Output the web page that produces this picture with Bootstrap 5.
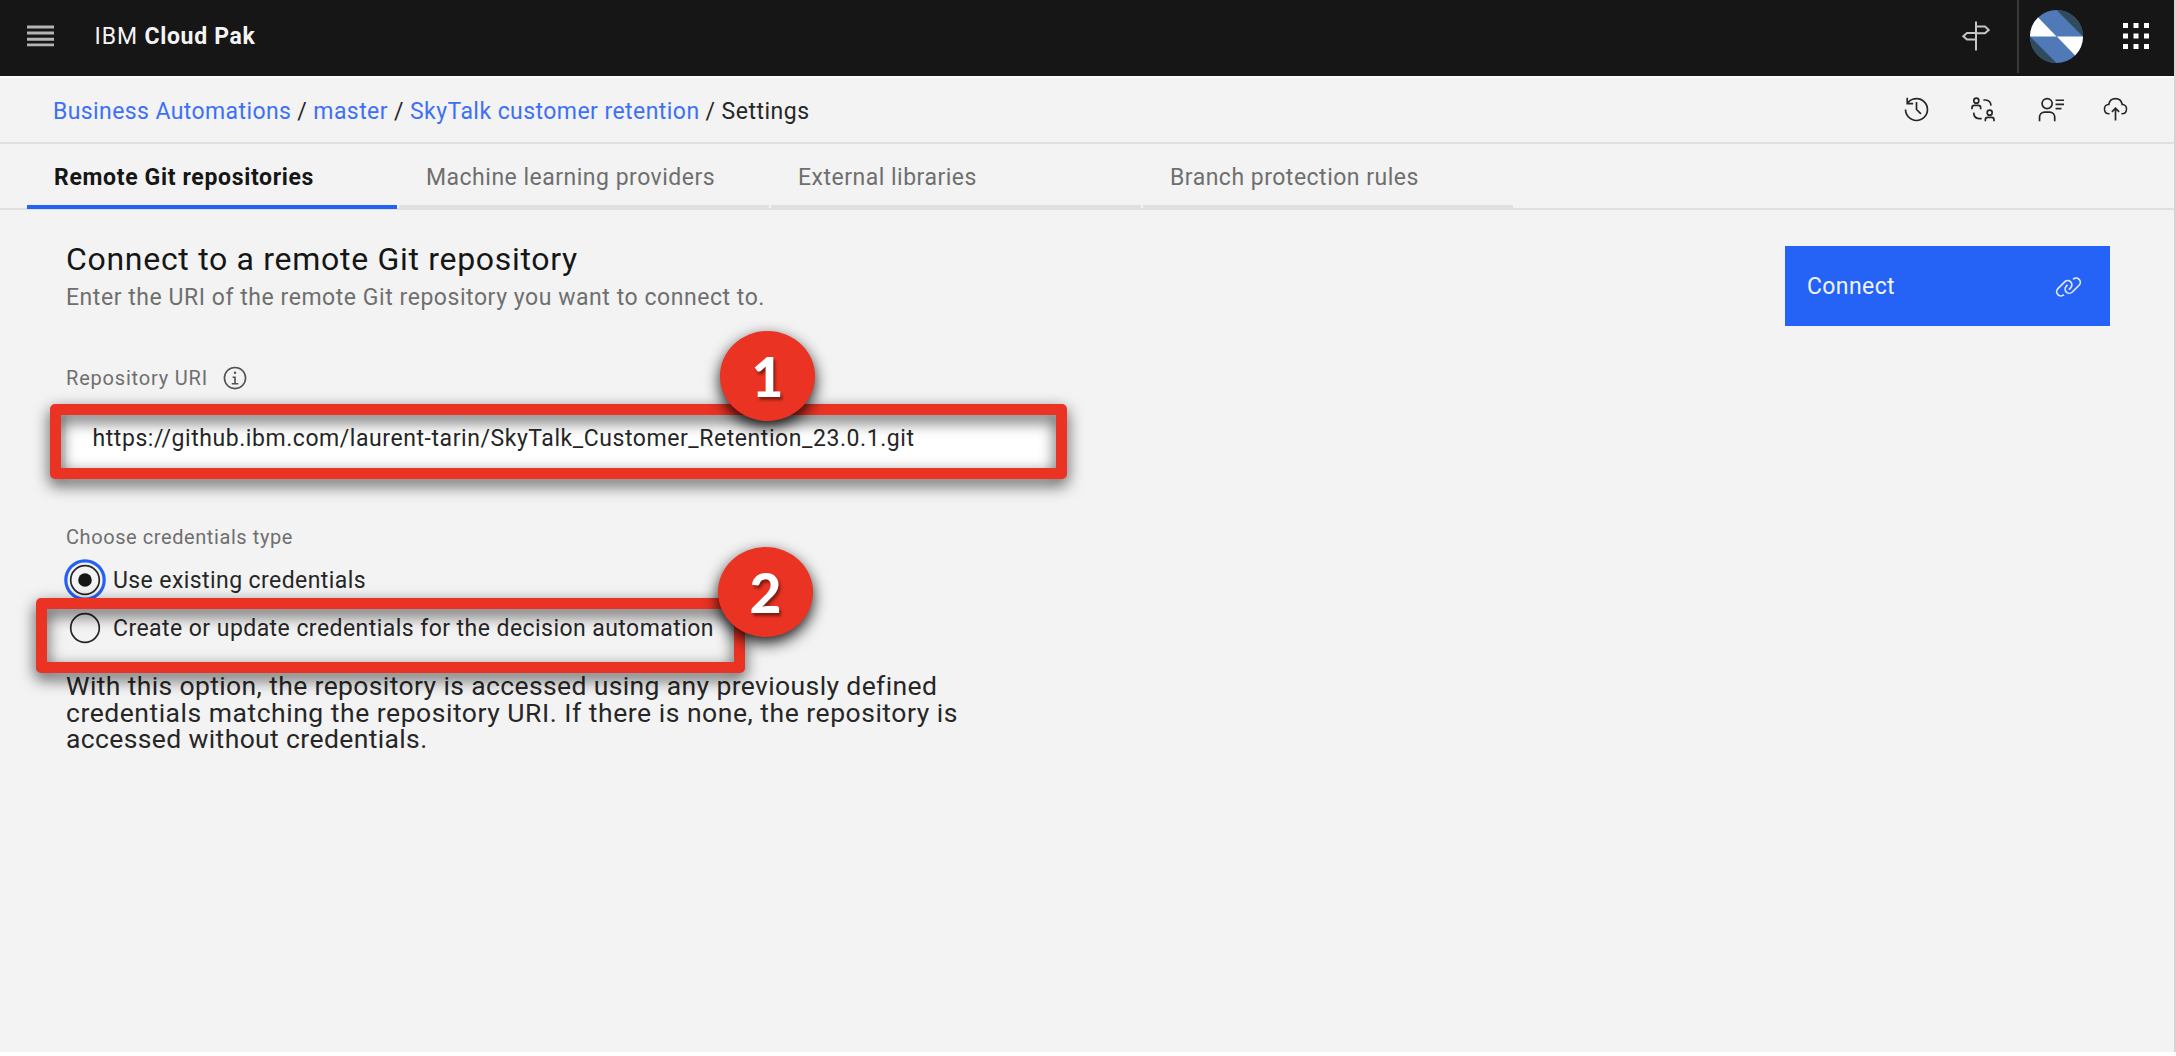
<!DOCTYPE html>
<html lang="en">
<head>
<meta charset="utf-8">
<meta name="viewport" content="width=device-width, initial-scale=1">
<title>IBM Cloud Pak - Settings</title>
<link href="https://cdn.jsdelivr.net/npm/bootstrap@5.3.0/dist/css/bootstrap.min.css" rel="stylesheet">
<style>
body{font-family:Roboto,"Noto Sans",sans-serif;font-size:23px;line-height:28px;letter-spacing:.5px;color:#262626;background:#fff;white-space:nowrap;overflow:hidden}
.app-shell{height:1052px;background:#f3f3f3;border-right:2px solid #d4d4d4}
.top-bar{height:76px;background:#161616;color:#f4f4f4;padding:0 0 4px 27px}
.brand-name{margin-left:40.5px;padding-top:2px;letter-spacing:.9px;color:#f4f4f4}
.brand-name b{letter-spacing:.67px}
.top-sep{width:2px;height:74px;background:#393939;margin:0 11px 0 26px;align-self:flex-start}
.app-dots{margin:0 24px 0 40.5px}
.crumb-bar{height:68px;border-top:2px solid #fcfcfc;border-bottom:2px solid #e0e0e0;padding:0 45px 0 53px}
.crumb-bar a{color:#3d70f6;text-decoration:none;letter-spacing:.44px}
.crumb-trail{padding-top:3px;gap:6px}
.crumb-trail a:first-child{letter-spacing:.4px}
.crumb-tools{gap:41px;padding-bottom:1px}
.tab-bar{height:66px;border-bottom:2px solid #e0e0e0;padding-left:27px;gap:1.6px}
.tab-bar .nav-link{width:370.4px;height:65px;padding:20px 0 0 27px;border-bottom:4px solid #e0e0e0;color:#6f6f6f}
.tab-bar .nav-link.active{color:#161616;font-weight:700;letter-spacing:.66px;border-bottom-color:#2462f5}
.settings-body{padding:29px 64px 0 66px}
.page-title{font-size:32px;line-height:40px;font-weight:400;letter-spacing:.7px;color:#161616;margin:0 0 5px}
.page-hint{color:#6f6f6f;letter-spacing:.547px;margin:0}
.field-label{font-size:20px;line-height:24px;color:#6f6f6f;letter-spacing:.58px;margin:0}
.uri-label{margin-top:53px;letter-spacing:.81px}
.uri-label svg{margin-left:14px}
.uri-input{width:996px;height:67px;margin-top:14px;padding:1px 0 0 26.5px;border:0;border-bottom:1px solid #8d8d8d;border-radius:0;background:#fff;font-size:23px;letter-spacing:.561px;color:#262626}
.cred-label{margin-top:53px}
.radio-list{margin-top:7px}
.radio-line{height:48px;gap:7px;margin-left:-2px}
.radio-line span{padding-top:2px}
.cred-note{font-size:26.5px;line-height:26.6px;margin:21px 0 0;letter-spacing:.375px}
.btn-connect{width:325px;height:80px;margin-top:7px;padding:0 28px 0 22px;border:0;border-radius:0;background:#2563f6;color:#f0f4ff;font-size:23px;letter-spacing:.39px}
.btn-connect span{padding-top:3px}
.mark-frame{position:absolute;border:11px solid #ea3323;border-radius:5px;filter:drop-shadow(0 6px 8px rgba(0,0,0,.7));pointer-events:none}
.frame-uri{left:50px;top:404px;width:1017px;height:75px}
.frame-cred{left:36px;top:598px;width:709px;height:75px}
.mark-dot{position:absolute;width:95px;height:90px;border-radius:50%;background:#ea3323;color:#fff;font:900 55px/90px Lato,"DejaVu Sans",sans-serif;letter-spacing:0;text-align:center;text-shadow:2px 3px 3px rgba(0,0,0,.45);box-shadow:0 6px 15px rgba(0,0,0,.9)}
.dot-one{left:720px;top:331px}
.dot-two{left:718px;top:547px}
svg{display:block;flex:none}
</style>
</head>
<body>
<div class="app-shell position-relative">
  <header class="top-bar d-flex align-items-center">
    <svg width="27" height="22" viewBox="0 0 27 22" fill="#b4b4b4"><path d="M0 0.5h27v3H0zM0 6.6h27v3H0zM0 12.7h27v3H0zM0 18.6h27v2.6H0z"/></svg>
    <div class="brand-name">IBM <b>Cloud Pak</b></div>
    <div class="d-flex align-items-center ms-auto">
      <svg width="30" height="30" viewBox="0 0 30 30" fill="none" stroke="#c6c6c6" stroke-width="2"><path d="M15 .5v29M15 5.500h9l3.700 3.400-3.700 3.400H15M15 12h-9L2.300 15.200 6 18.400h9M6 12.100h9"/></svg>
      <div class="top-sep"></div>
      <svg width="53" height="53" viewBox="510 27 158 158"><defs><clipPath id="face"><circle cx="589" cy="106" r="79"/></clipPath></defs><g clip-path="url(#face)"><path fill="#5079b8" d="M510 27h158v158H510z"/><path fill="#fff" d="M500 106h89L525 40H500zM679 106h-89l64 66h25z"/><path fill="#304b5c" d="M589 27l79 79V27zM510 106l79 79h-79z"/></g></svg>
      <svg class="app-dots" width="27" height="26" viewBox="0 0 27 26" fill="#fff"><path d="M0 0h5v5H0zM10.500 0h5v5h-5zM21 0h5v5h-5zM0 10.500h5v5H0zM10.500 10.500h5v5h-5zM21 10.500h5v5h-5zM0 21h5v5H0zM10.500 21h5v5h-5zM21 21h5v5h-5z"/></svg>
    </div>
  </header>

  <nav class="crumb-bar d-flex align-items-center justify-content-between">
    <div class="crumb-trail d-flex">
      <a href="#">Business Automations</a><span>/</span><a href="#">master</a><span>/</span><a href="#">SkyTalk customer retention</a><span>/</span><span>Settings</span>
    </div>
    <div class="crumb-tools d-flex align-items-center">
      <svg width="27" height="27" viewBox="0 0 32 32" fill="#262626"><path d="M20.590 22 15 16.410V7h2v8.580l5 5.010zM16 2A13.940 13.940 0 0 0 6 6.230V2H4v8h8V8H7.080A12 12 0 1 1 4 16H2A14 14 0 1 0 16 2Z"/></svg>
      <svg width="25" height="25" viewBox="335 290 75 75" fill="none" stroke="#262626" stroke-width="5"><circle cx="351" cy="301" r="7.500"/><path d="M338 327v-5q0-7 7-7h12q7 0 7 7v5M372 299h6q16 1 17 17M343 337q1 17 16 18h8M378 363v-5q0-7 7-7h12q7 0 7 7v5"/><circle cx="391" cy="337" r="7.500"/></svg>
      <svg width="27" height="27" viewBox="0 0 32 32" fill="#262626"><path d="M12 4A5 5 0 1 1 7 9a5 5 0 0 1 5-5m0-2a7 7 0 1 0 7 7A7 7 0 0 0 12 2ZM22 30h-2v-5a5 5 0 0 0-5-5H9a5 5 0 0 0-5 5v5H2v-5a7 7 0 0 1 7-7h6a7 7 0 0 1 7 7ZM22 4h10v2H22zM22 9h10v2H22zM22 14h7v2h-7z"/></svg>
      <svg width="27" height="27" viewBox="0 0 32 32" fill="#262626" style="margin-left:-3px"><path d="M11 18l1.410 1.410L15 16.830V29h2V16.830l2.590 2.580L21 18l-5-5-5 5z"/><path d="M23.500 22H23v-2h.5a4.500 4.500 0 0 0 .36-9L23 11l-.1-.82a7 7 0 0 0-13.880 0L9 11l-.86 0a4.500 4.500 0 0 0 .36 9H9v2h-.5A6.500 6.500 0 0 1 7.200 9.140a9 9 0 0 1 17.600 0A6.500 6.500 0 0 1 23.500 22Z"/></svg>
    </div>
  </nav>

  <div class="tab-bar nav flex-nowrap">
    <a class="nav-link active" href="#">Remote Git repositories</a>
    <a class="nav-link" href="#">Machine learning providers</a>
    <a class="nav-link" href="#">External libraries</a>
    <a class="nav-link" href="#">Branch protection rules</a>
  </div>

  <main class="settings-body d-flex justify-content-between align-items-start">
    <section>
      <h1 class="page-title">Connect to a remote Git repository</h1>
      <p class="page-hint">Enter the URI of the remote Git repository you want to connect to.</p>
      <div class="field-label uri-label d-flex align-items-center">Repository URI
        <svg width="26" height="26" viewBox="0 0 32 32" fill="#525252"><path d="M17 22v-8h-4v2h2v6h-3v2h8v-2zM16 8a1.500 1.500 0 1 0 1.500 1.500A1.500 1.500 0 0 0 16 8Z"/><path d="M16 30a14 14 0 1 1 14-14 14 14 0 0 1-14 14Zm0-26a12 12 0 1 0 12 12A12 12 0 0 0 16 4Z"/></svg>
      </div>
      <input class="uri-input form-control shadow-none" type="text" value="https://github.ibm.com/laurent-tarin/SkyTalk_Customer_Retention_23.0.1.git">
      <p class="field-label cred-label">Choose credentials type</p>
      <div class="radio-list">
        <label class="radio-line d-flex align-items-center">
          <svg width="42" height="42" viewBox="0 0 42 42" fill="none"><circle cx="21" cy="21" r="19.200" stroke="#2462f5" stroke-width="3.200"/><circle cx="21" cy="21" r="14.300" stroke="#262626" stroke-width="1.700"/><circle cx="21" cy="21" r="6.800" fill="#161616"/></svg>
          <span style="letter-spacing:.417px">Use existing credentials</span>
        </label>
        <label class="radio-line d-flex align-items-center">
          <svg width="42" height="42" viewBox="0 0 42 42" fill="none"><circle cx="21" cy="21" r="14.300" stroke="#262626" stroke-width="1.700"/></svg>
          <span style="letter-spacing:.446px">Create or update credentials for the decision automation</span>
        </label>
      </div>
      <p class="cred-note">With this option, the repository is accessed using any previously defined<br><span style="letter-spacing:.525px">credentials matching the repository URI. If there is none, the repository is</span><br>accessed without credentials.</p>
    </section>
    <button class="btn-connect btn d-flex align-items-center justify-content-between" type="button"><span>Connect</span>
      <svg width="27" height="27" viewBox="0 0 32 32" fill="#dfe8ff"><path d="M29.250 6.760a6 6 0 0 0-8.500 0l1.420 1.420a4 4 0 1 1 5.670 5.670l-8 8a4 4 0 1 1-5.670-5.660l1.410-1.420-1.410-1.420-1.420 1.420a6 6 0 0 0 0 8.500A6 6 0 0 0 17 25a6 6 0 0 0 4.270-1.760l8-8A6 6 0 0 0 29.250 6.760Z"/><path d="M4.190 24.820a4 4 0 0 1 0-5.670l8-8a4 4 0 0 1 5.670 0A3.940 3.940 0 0 1 19 14a4 4 0 0 1-1.170 2.850L15.710 19l1.420 1.420 2.120-2.120a6 6 0 0 0-8.510-8.510l-8 8a6 6 0 0 0 0 8.510A6 6 0 0 0 7 28a6.070 6.070 0 0 0 4.280-1.760L9.860 24.820A4 4 0 0 1 4.190 24.820Z"/></svg>
    </button>
  </main>

  <div class="mark-frame frame-uri"></div>
  <div class="mark-frame frame-cred"></div>
  <div class="mark-dot dot-one">1</div>
  <div class="mark-dot dot-two">2</div>
</div>
<script src="https://cdn.jsdelivr.net/npm/bootstrap@5.3.0/dist/js/bootstrap.bundle.min.js"></script>
</body>
</html>
